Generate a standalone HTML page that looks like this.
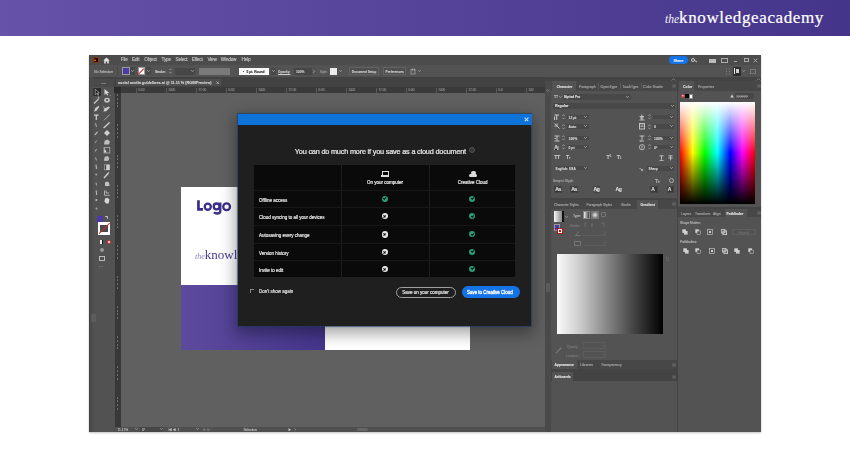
<!DOCTYPE html>
<html><head><meta charset="utf-8">
<style>
*{margin:0;padding:0;box-sizing:border-box}
html,body{width:850px;height:450px;overflow:hidden;background:#fff;font-family:"Liberation Sans",sans-serif}
.a{position:absolute}
.t{position:absolute;white-space:nowrap;line-height:1;color:#d8d8d8}
#hdr{position:absolute;left:0;top:0;width:850px;height:36px;background:linear-gradient(90deg,#6652a8 0%,#44358b 100%)}
#logo{position:absolute;left:665px;top:8.9px;color:#fff;font-family:"Liberation Serif",serif;font-size:17px;line-height:1;white-space:nowrap;letter-spacing:0.62px;-webkit-text-stroke:0.2px #fff}
#logo i{font-size:11.5px;letter-spacing:0;-webkit-text-stroke:0;color:#f4f2fa}
#shot{position:absolute;left:89px;top:55px;width:672px;height:377px;background:#535353;overflow:hidden;box-shadow:0 1px 2px rgba(0,0,0,.25)}
#w{position:absolute;left:-89px;top:-55px;width:850px;height:450px;will-change:transform}

.f{position:absolute;background:#474747}
.x{position:absolute;white-space:nowrap;line-height:1;color:#cfcfcf;font-size:4.6px;-webkit-text-stroke-width:0.12px}
.xb{position:absolute;white-space:nowrap;line-height:1;color:#e6e6e6;font-size:4.6px;font-weight:bold;-webkit-text-stroke-width:0.08px}
.ch{position:absolute;width:3px;height:3px;border-right:0.8px solid #ccc;border-bottom:0.8px solid #ccc;transform:rotate(45deg)}
.ic{position:absolute;background:#bdbdbd}
.sp{position:absolute;width:3px;height:5px}
.sp:before{content:"";position:absolute;left:0;top:0;border-left:1.5px solid transparent;border-right:1.5px solid transparent;border-bottom:1.8px solid #bbb}
.sp:after{content:"";position:absolute;left:0;bottom:0;border-left:1.5px solid transparent;border-right:1.5px solid transparent;border-top:1.8px solid #bbb}
</style></head><body>
<div id="hdr"><div id="logo"><i>the</i>knowledgeacademy</div></div>
<div id="shot"><div id="w">
<!-- MENU BAR -->
<div class="a" style="left:89px;top:55px;width:672px;height:10px;background:#4c4c4c"></div>
<!-- CONTROL BAR -->
<div class="a" style="left:89px;top:65px;width:672px;height:12px;background:#535353"></div>
<!-- TAB BAR -->
<div class="a" style="left:89px;top:77px;width:456px;height:10px;background:#424242"></div>
<div class="a" style="left:115.5px;top:79px;width:105.5px;height:7px;background:#4e4e4e"></div>
<!-- TOOLBAR -->
<div class="a" style="left:89px;top:77px;width:4px;height:355px;background:#4c4c4c"></div><div class="a" style="left:89px;top:77px;width:0.6px;height:355px;background:#404040"></div>
<div class="a" style="left:93px;top:79px;width:21px;height:353px;background:#525252"></div>
<!-- V RULER -->
<div class="a" style="left:114.7px;top:87px;width:6px;height:340px;background:#383838"></div>
<!-- H RULER -->
<div class="a" style="left:114px;top:87px;width:431px;height:5.5px;background:#3a3a3a"></div>
<!-- CANVAS -->
<div class="a" style="left:121px;top:92.5px;width:424px;height:334px;background:#606060"></div>
<!-- STATUS BAR -->
<div class="a" style="left:114px;top:426.5px;width:431px;height:6px;background:#4f4f4f"></div><div class="a" style="left:357px;top:428px;width:11px;height:3px;background:#666;border-radius:1.5px"></div>

<div class="a" style="left:136.4px;top:87.5px;width:0.5px;height:5px;background:#5a5a5a"></div>
<div class="x" style="left:138.4px;top:88.6px;font-size:3.1px;color:#8c8c8c">0:00</div>
<div class="a" style="left:166.4px;top:87.5px;width:0.5px;height:5px;background:#5a5a5a"></div>
<div class="x" style="left:168.4px;top:88.6px;font-size:3.1px;color:#8c8c8c">2400</div>
<div class="a" style="left:196.4px;top:87.5px;width:0.5px;height:5px;background:#5a5a5a"></div>
<div class="x" style="left:198.4px;top:88.6px;font-size:3.1px;color:#8c8c8c">12:00</div>
<div class="a" style="left:226.4px;top:87.5px;width:0.5px;height:5px;background:#5a5a5a"></div>
<div class="x" style="left:228.4px;top:88.6px;font-size:3.1px;color:#8c8c8c">0:00</div>
<div class="a" style="left:256.4px;top:87.5px;width:0.5px;height:5px;background:#5a5a5a"></div>
<div class="x" style="left:258.4px;top:88.6px;font-size:3.1px;color:#8c8c8c">2400</div>
<div class="a" style="left:286.4px;top:87.5px;width:0.5px;height:5px;background:#5a5a5a"></div>
<div class="x" style="left:288.4px;top:88.6px;font-size:3.1px;color:#8c8c8c">12:00</div>
<div class="a" style="left:316.4px;top:87.5px;width:0.5px;height:5px;background:#5a5a5a"></div>
<div class="x" style="left:318.4px;top:88.6px;font-size:3.1px;color:#8c8c8c">0:00</div>
<div class="a" style="left:346.4px;top:87.5px;width:0.5px;height:5px;background:#5a5a5a"></div>
<div class="x" style="left:348.4px;top:88.6px;font-size:3.1px;color:#8c8c8c">2400</div>
<div class="a" style="left:376.4px;top:87.5px;width:0.5px;height:5px;background:#5a5a5a"></div>
<div class="x" style="left:378.4px;top:88.6px;font-size:3.1px;color:#8c8c8c">12:00</div>
<div class="a" style="left:406.4px;top:87.5px;width:0.5px;height:5px;background:#5a5a5a"></div>
<div class="x" style="left:408.4px;top:88.6px;font-size:3.1px;color:#8c8c8c">0:00</div>
<div class="a" style="left:436.4px;top:87.5px;width:0.5px;height:5px;background:#5a5a5a"></div>
<div class="x" style="left:438.4px;top:88.6px;font-size:3.1px;color:#8c8c8c">2400</div>
<div class="a" style="left:466.4px;top:87.5px;width:0.5px;height:5px;background:#5a5a5a"></div>
<div class="x" style="left:468.4px;top:88.6px;font-size:3.1px;color:#8c8c8c">12:00</div>
<div class="a" style="left:496.4px;top:87.5px;width:0.5px;height:5px;background:#5a5a5a"></div>
<div class="x" style="left:498.4px;top:88.6px;font-size:3.1px;color:#8c8c8c">0:0</div>
<div class="a" style="left:526.4px;top:87.5px;width:0.5px;height:5px;background:#5a5a5a"></div>
<div class="x" style="left:528.4px;top:88.6px;font-size:3.1px;color:#8c8c8c">240</div>
<div class="a" style="left:116.6px;top:94.0px;width:1.6px;height:2px;background:#8a8a8a;border-radius:0.5px;opacity:.8"></div>
<div class="a" style="left:116.6px;top:97.8px;width:1.6px;height:2px;background:#8a8a8a;border-radius:0.5px;opacity:.8"></div>
<div class="a" style="left:116.6px;top:101.6px;width:1.6px;height:2px;background:#8a8a8a;border-radius:0.5px;opacity:.8"></div>
<div class="a" style="left:116.6px;top:105.4px;width:1.6px;height:2px;background:#8a8a8a;border-radius:0.5px;opacity:.8"></div>
<div class="a" style="left:116.6px;top:124.2px;width:1.6px;height:2px;background:#8a8a8a;border-radius:0.5px;opacity:.8"></div>
<div class="a" style="left:116.6px;top:128.1px;width:1.6px;height:2px;background:#8a8a8a;border-radius:0.5px;opacity:.8"></div>
<div class="a" style="left:116.6px;top:131.8px;width:1.6px;height:2px;background:#8a8a8a;border-radius:0.5px;opacity:.8"></div>
<div class="a" style="left:116.6px;top:135.7px;width:1.6px;height:2px;background:#8a8a8a;border-radius:0.5px;opacity:.8"></div>
<div class="a" style="left:116.6px;top:154.5px;width:1.6px;height:2px;background:#8a8a8a;border-radius:0.5px;opacity:.8"></div>
<div class="a" style="left:116.6px;top:158.3px;width:1.6px;height:2px;background:#8a8a8a;border-radius:0.5px;opacity:.8"></div>
<div class="a" style="left:116.6px;top:162.1px;width:1.6px;height:2px;background:#8a8a8a;border-radius:0.5px;opacity:.8"></div>
<div class="a" style="left:116.6px;top:165.9px;width:1.6px;height:2px;background:#8a8a8a;border-radius:0.5px;opacity:.8"></div>
<div class="a" style="left:116.6px;top:184.8px;width:1.6px;height:2px;background:#8a8a8a;border-radius:0.5px;opacity:.8"></div>
<div class="a" style="left:116.6px;top:188.6px;width:1.6px;height:2px;background:#8a8a8a;border-radius:0.5px;opacity:.8"></div>
<div class="a" style="left:116.6px;top:192.3px;width:1.6px;height:2px;background:#8a8a8a;border-radius:0.5px;opacity:.8"></div>
<div class="a" style="left:116.6px;top:196.2px;width:1.6px;height:2px;background:#8a8a8a;border-radius:0.5px;opacity:.8"></div>
<div class="a" style="left:116.6px;top:215.0px;width:1.6px;height:2px;background:#8a8a8a;border-radius:0.5px;opacity:.8"></div>
<div class="a" style="left:116.6px;top:218.8px;width:1.6px;height:2px;background:#8a8a8a;border-radius:0.5px;opacity:.8"></div>
<div class="a" style="left:116.6px;top:222.6px;width:1.6px;height:2px;background:#8a8a8a;border-radius:0.5px;opacity:.8"></div>
<div class="a" style="left:116.6px;top:226.4px;width:1.6px;height:2px;background:#8a8a8a;border-radius:0.5px;opacity:.8"></div>
<div class="a" style="left:116.6px;top:245.2px;width:1.6px;height:2px;background:#8a8a8a;border-radius:0.5px;opacity:.8"></div>
<div class="a" style="left:116.6px;top:249.1px;width:1.6px;height:2px;background:#8a8a8a;border-radius:0.5px;opacity:.8"></div>
<div class="a" style="left:116.6px;top:252.8px;width:1.6px;height:2px;background:#8a8a8a;border-radius:0.5px;opacity:.8"></div>
<div class="a" style="left:116.6px;top:256.6px;width:1.6px;height:2px;background:#8a8a8a;border-radius:0.5px;opacity:.8"></div>
<div class="a" style="left:116.6px;top:275.5px;width:1.6px;height:2px;background:#8a8a8a;border-radius:0.5px;opacity:.8"></div>
<div class="a" style="left:116.6px;top:279.3px;width:1.6px;height:2px;background:#8a8a8a;border-radius:0.5px;opacity:.8"></div>
<div class="a" style="left:116.6px;top:283.1px;width:1.6px;height:2px;background:#8a8a8a;border-radius:0.5px;opacity:.8"></div>
<div class="a" style="left:116.6px;top:286.9px;width:1.6px;height:2px;background:#8a8a8a;border-radius:0.5px;opacity:.8"></div>
<div class="a" style="left:116.6px;top:305.8px;width:1.6px;height:2px;background:#8a8a8a;border-radius:0.5px;opacity:.8"></div>
<div class="a" style="left:116.6px;top:309.6px;width:1.6px;height:2px;background:#8a8a8a;border-radius:0.5px;opacity:.8"></div>
<div class="a" style="left:116.6px;top:313.4px;width:1.6px;height:2px;background:#8a8a8a;border-radius:0.5px;opacity:.8"></div>
<div class="a" style="left:116.6px;top:317.1px;width:1.6px;height:2px;background:#8a8a8a;border-radius:0.5px;opacity:.8"></div>
<div class="a" style="left:116.6px;top:336.0px;width:1.6px;height:2px;background:#8a8a8a;border-radius:0.5px;opacity:.8"></div>
<div class="a" style="left:116.6px;top:339.8px;width:1.6px;height:2px;background:#8a8a8a;border-radius:0.5px;opacity:.8"></div>
<div class="a" style="left:116.6px;top:343.6px;width:1.6px;height:2px;background:#8a8a8a;border-radius:0.5px;opacity:.8"></div>
<div class="a" style="left:116.6px;top:347.4px;width:1.6px;height:2px;background:#8a8a8a;border-radius:0.5px;opacity:.8"></div>
<div class="a" style="left:116.6px;top:366.2px;width:1.6px;height:2px;background:#8a8a8a;border-radius:0.5px;opacity:.8"></div>
<div class="a" style="left:116.6px;top:370.1px;width:1.6px;height:2px;background:#8a8a8a;border-radius:0.5px;opacity:.8"></div>
<div class="a" style="left:116.6px;top:373.9px;width:1.6px;height:2px;background:#8a8a8a;border-radius:0.5px;opacity:.8"></div>
<div class="a" style="left:116.6px;top:377.6px;width:1.6px;height:2px;background:#8a8a8a;border-radius:0.5px;opacity:.8"></div>
<div class="a" style="left:116.6px;top:396.5px;width:1.6px;height:2px;background:#8a8a8a;border-radius:0.5px;opacity:.8"></div>
<div class="a" style="left:116.6px;top:400.3px;width:1.6px;height:2px;background:#8a8a8a;border-radius:0.5px;opacity:.8"></div>
<div class="a" style="left:116.6px;top:404.1px;width:1.6px;height:2px;background:#8a8a8a;border-radius:0.5px;opacity:.8"></div>
<div class="a" style="left:116.6px;top:407.9px;width:1.6px;height:2px;background:#8a8a8a;border-radius:0.5px;opacity:.8"></div>
<!-- MENU CONTENT -->
<div class="a" style="left:92.8px;top:57px;width:6px;height:6px;background:#330000;border:0.6px solid #8a3a10;border-radius:1px"></div>
<div class="a" style="left:94.3px;top:58.6px;width:0;height:0;border-left:1.5px solid transparent;border-right:1.5px solid transparent;border-bottom:2.6px solid #ff9a00"></div>
<svg class="a" style="left:103px;top:56.8px" width="7" height="7" viewBox="0 0 7 7"><path d="M0.3 3.4 L3.5 0.4 L6.7 3.4 L5.8 3.4 L5.8 6.6 L4.2 6.6 L4.2 4.6 L2.8 4.6 L2.8 6.6 L1.2 6.6 L1.2 3.4 Z" fill="#e2e2e2"/></svg>

<div class="x" style="left:120.8px;top:58px;font-size:4.7px;letter-spacing:-0.2px;color:#c8c8c8">File</div>
<div class="x" style="left:132px;top:58px;font-size:4.7px;letter-spacing:-0.2px;color:#c8c8c8">Edit</div>
<div class="x" style="left:144.3px;top:58px;font-size:4.7px;letter-spacing:-0.2px;color:#c8c8c8">Object</div>
<div class="x" style="left:161.5px;top:58px;font-size:4.7px;letter-spacing:-0.2px;color:#c8c8c8">Type</div>
<div class="x" style="left:175.6px;top:58px;font-size:4.7px;letter-spacing:-0.2px;color:#c8c8c8">Select</div>
<div class="x" style="left:191.8px;top:58px;font-size:4.7px;letter-spacing:-0.2px;color:#c8c8c8">Effect</div>
<div class="x" style="left:207.4px;top:58px;font-size:4.7px;letter-spacing:-0.2px;color:#c8c8c8">View</div>
<div class="x" style="left:220.8px;top:58px;font-size:4.7px;letter-spacing:-0.2px;color:#c8c8c8">Window</div>
<div class="x" style="left:241.5px;top:58px;font-size:4.7px;letter-spacing:-0.2px;color:#c8c8c8">Help</div>

<div class="a" style="left:669.3px;top:56.4px;width:18.5px;height:7.8px;border-radius:3.9px;background:#1473e6"></div>
<div class="xb" style="left:673.4px;top:59.6px;font-size:3.7px;color:#e8f0ff">Share</div>
<div class="a" style="left:691px;top:57.5px;width:4.2px;height:4.2px;border:1px solid #ccc;border-radius:50%"></div>
<div class="a" style="left:695px;top:61.3px;width:2.2px;height:1px;background:#ccc;transform:rotate(45deg)"></div>
<div class="a" style="left:709px;top:58.5px;width:6.5px;height:4.5px;background:#bbb"></div>
<div class="a" style="left:721px;top:58px;width:6.5px;height:5px;border:0.8px solid #aaa"></div>
<div class="a" style="left:733.5px;top:60.5px;width:3.5px;height:0.8px;background:#aaa"></div>
<div class="a" style="left:744px;top:57.5px;width:4.5px;height:4px;border:0.8px solid #aaa"></div>
<svg class="a" style="left:753px;top:57.5px" width="5" height="5" viewBox="0 0 5 5"><path d="M0.6 0.6 L4.4 4.4 M4.4 0.6 L0.6 4.4" stroke="#c4c4c4" stroke-width="0.7"/></svg>

<!-- CONTROL BAR CONTENT -->
<div class="x" style="left:94.3px;top:70.85px;font-size:3.3px;color:#bdbdbd;">No Selection</div>
<div class="a" style="left:116.5px;top:66.5px;width:0.6px;height:9px;background:#474747;"></div>
<div class="a" style="left:122.3px;top:67.3px;width:7.3px;height:7.7px;background:#4a3ca6;border:0.8px solid #9a9a9a"></div>
<div class="a" style="left:130px;top:67.3px;width:5px;height:7.7px;background:#474747;"></div>
<svg class="a" style="left:131.0px;top:70.2px" width="3" height="2" viewBox="0 0 3 2"><path d="M0.2 0.2 L1.5 1.6 L2.8 0.2" fill="none" stroke="#bbb" stroke-width="0.7"/></svg>
<div class="a" style="left:137.8px;top:67.3px;width:7.1px;height:7.7px;background:#fff;border:0.8px solid #9a9a9a"></div>
<div class="a" style="left:137.3px;top:70.7px;width:8.2px;height:0.9px;background:#d22;transform:rotate(-45deg)"></div>
<div class="a" style="left:145.5px;top:67.3px;width:5px;height:7.7px;background:#474747;"></div>
<svg class="a" style="left:146.5px;top:70.2px" width="3" height="2" viewBox="0 0 3 2"><path d="M0.2 0.2 L1.5 1.6 L2.8 0.2" fill="none" stroke="#bbb" stroke-width="0.7"/></svg>
<div class="xb" style="left:154.9px;top:70.85px;font-size:3.2px;color:#cfcfcf;">Stroke:</div>
<svg class="a" style="left:168.5px;top:68px" width="3" height="6" viewBox="0 0 3 6"><path d="M0.3 2.2 L1.5 0.8 L2.7 2.2 M0.3 3.8 L1.5 5.2 L2.7 3.8" fill="none" stroke="#bbb" stroke-width="0.6"/></svg>
<div class="a" style="left:175px;top:67.5px;width:20px;height:7.2px;background:#474747;"></div>
<svg class="a" style="left:190.5px;top:70.2px" width="3" height="2" viewBox="0 0 3 2"><path d="M0.2 0.2 L1.5 1.6 L2.8 0.2" fill="none" stroke="#bbb" stroke-width="0.7"/></svg>
<div class="a" style="left:199px;top:67.6px;width:31.1px;height:7.1px;background:#7a7a7a;"></div>
<div class="a" style="left:239.2px;top:68px;width:29.8px;height:6.5px;background:#f7f7f7;"></div>
<div class="a" style="left:242.5px;top:70.6px;width:1.2px;height:1.2px;background:#222;border-radius:50%"></div>
<div class="xb" style="left:246.5px;top:70.85px;font-size:3.3px;color:#1a1a1a;">5 pt. Round</div>
<div class="a" style="left:270.5px;top:68px;width:5px;height:6.5px;background:#474747;"></div>
<svg class="a" style="left:271.5px;top:70.2px" width="3" height="2" viewBox="0 0 3 2"><path d="M0.2 0.2 L1.5 1.6 L2.8 0.2" fill="none" stroke="#bbb" stroke-width="0.7"/></svg>
<div class="xb" style="left:278px;top:70.85px;font-size:3.1px;color:#cfcfcf;text-decoration:underline">Opacity:</div>
<div class="a" style="left:294px;top:67.6px;width:17.8px;height:7px;background:#474747;"></div>
<div class="xb" style="left:296px;top:70.85px;font-size:3.3px;color:#cfcfcf;">100%</div>
<svg class="a" style="left:312.8px;top:69.5px" width="2" height="3" viewBox="0 0 2 3"><path d="M0.2 0.2 L1.6 1.5 L0.2 2.8" fill="none" stroke="#bbb" stroke-width="0.6"/></svg>
<div class="x" style="left:319.7px;top:70.85px;font-size:3.1px;color:#9a9a9a;">Style:</div>
<div class="a" style="left:330px;top:67.5px;width:7px;height:7px;background:#ececec;"></div>
<svg class="a" style="left:338.5px;top:70.2px" width="3" height="2" viewBox="0 0 3 2"><path d="M0.2 0.2 L1.5 1.6 L2.8 0.2" fill="none" stroke="#bbb" stroke-width="0.7"/></svg>
<div class="a" style="left:348.5px;top:67.3px;width:30.5px;height:7.5px;background:#4e4e4e;border:0.6px solid #626262"></div>
<div class="xb" style="left:351.8px;top:70.85px;font-size:3.1px;color:#d4d4d4;">Document Setup</div>
<div class="a" style="left:383px;top:67.3px;width:23px;height:7.5px;background:#4e4e4e;border:0.6px solid #626262"></div>
<div class="xb" style="left:385.5px;top:70.85px;font-size:3.2px;color:#d4d4d4;">Preferences</div>
<svg class="a" style="left:410px;top:67.5px" width="7" height="7" viewBox="0 0 7 7"><rect x="1" y="1.5" width="4" height="4.5" fill="none" stroke="#aaa" stroke-width="0.7"/><path d="M2.5 0.5 V3 M4.5 0.5 V3" stroke="#aaa" stroke-width="0.6"/></svg>
<svg class="a" style="left:417.5px;top:70.2px" width="3" height="2" viewBox="0 0 3 2"><path d="M0.2 0.2 L1.5 1.6 L2.8 0.2" fill="none" stroke="#aaa" stroke-width="0.7"/></svg>
<svg class="a" style="left:724.5px;top:67.5px" width="6" height="7" viewBox="0 0 6 7"><path d="M1 1 H2 M4 1 H5 M1 3.5 H2 M4 3.5 H5 M1 6 H2 M4 6 H5" stroke="#8a8a8a" stroke-width="0.8"/></svg>
<div class="a" style="left:732.5px;top:66.5px;width:8px;height:9px;background:#2e2e2e;"></div>
<div class="a" style="left:733.6px;top:67.8px;width:1.6px;height:6.6px;background:#e8e8e8;"></div>
<div class="a" style="left:735.8px;top:69.3px;width:3.2px;height:3.6px;background:#d0d0d0;"></div>
<svg class="a" style="left:742.0px;top:70.2px" width="3" height="2" viewBox="0 0 3 2"><path d="M0.2 0.2 L1.5 1.6 L2.8 0.2" fill="none" stroke="#aaa" stroke-width="0.7"/></svg>
<div class="a" style="left:750px;top:68.5px;width:5.5px;height:5px;background:transparent;border:0.6px solid #777"></div>
<!-- DOC TAB -->
<div class="xb" style="left:118px;top:82.1px;font-size:3.8px;color:#dcdcdc">social media guidelines.ai @ 11.11 % (RGB/Preview)</div>
<svg class="a" style="left:215.8px;top:80.8px" width="3.5" height="3.5" viewBox="0 0 3.5 3.5"><path d="M0.4 0.4 L3.1 3.1 M3.1 0.4 L0.4 3.1" stroke="#d0d0d0" stroke-width="0.6"/></svg>

<!-- H RULER LABELS -->
<div class="a" style="left:114px;top:87px;width:7px;height:5.5px;background:#2c2c2c"></div>

<div class="a" style="left:93px;top:79px;width:21px;height:8px;background:#4a4a4a"></div>
<div class="a" style="left:101px;top:82.5px;width:5px;height:0.7px;background:#777"></div>
<svg class="a" style="left:89px;top:85px" width="32" height="130" viewBox="89 85 32 130">
<g fill="#c8c8c8" stroke="none">
<rect x="93.3" y="88.2" width="7.6" height="7.6" fill="#262626"/>
<path d="M95.2 89.3 L95.2 94.6 L96.6 93.3 L97.8 95.2 L98.6 94.8 L97.5 92.9 L99.3 92.7 Z" fill="#1a1a1a" stroke="#d0d0d0" stroke-width="0.6"/>
<path d="M104.5 89 L104.5 95 L106 93.6 L107.2 95.6 L108.2 95.1 L107.1 93.2 L109.3 93 Z" fill="#d8d8d8"/>
<rect x="109.8" y="95.2" width="1" height="1" fill="#999"/>
<!-- wand / lasso -->
<path d="M94 103.5 L98.5 99" stroke="#c8c8c8" stroke-width="1.2"/>
<path d="M97.3 97.8 L99.8 97.8 M98.5 96.6 L98.5 99" stroke="#bbb" stroke-width="0.6"/>
<ellipse cx="107" cy="100.2" rx="2.8" ry="2.4" fill="#c4c4c4"/>
<ellipse cx="107" cy="100" rx="1.2" ry="0.9" fill="#555"/>
<!-- pen / curvature -->
<path d="M94 111.8 L95.2 108.2 L98.6 105.8 L99.2 107 L96.8 110.6 Z" fill="#cdcdcd"/>
<path d="M103.4 111.5 L104.4 108.6 L108.8 106.4 L109.8 107.6 L106.2 111.2 Z" fill="#cdcdcd"/>
<path d="M103.6 106 L104.4 109" stroke="#bbb" stroke-width="0.6"/>
<!-- Type / line -->
<path d="M94 115.2 L98.6 115.2 M96.3 115.2 L96.3 120" stroke="#d0d0d0" stroke-width="1.2"/>
<path d="M104 120.3 L109.8 114.5" stroke="#c8c8c8" stroke-width="0.7"/>
<!-- row 125 -->
<path d="M95.5 123 L96.5 127" stroke="#aaa" stroke-width="1"/>
<path d="M103.6 128 L109.6 122.4" stroke="#d0d0d0" stroke-width="1.3"/>
<!-- row 133 -->
<path d="M94.8 134.8 L97.6 131.8" stroke="#c8c8c8" stroke-width="1.1"/>
<path d="M104 133 L107 130 L110 133 L107 136 Z" fill="#d0d0d0"/>
<!-- row 142 -->
<path d="M95 143 L96.8 140.5" stroke="#aaa" stroke-width="0.9"/>
<path d="M104 144.5 L104.6 140.8 L107.5 139.6 L110 141.5 L109 144.5 Z" fill="#bdbdbd"/>
<!-- row 150 -->
<path d="M95.2 151.5 L96.5 149" stroke="#bbb" stroke-width="1"/>
<rect x="104" y="147.5" width="5.8" height="5.5" fill="none" stroke="#b8b8b8" stroke-width="0.7"/>
<path d="M104.2 148 L106.8 152.6 L104.2 152.6Z" fill="#d8d8d8"/>
<!-- row 159 -->
<path d="M95.5 157.5 L96.5 160.5" stroke="#aaa" stroke-width="1"/>
<path d="M103.8 160.8 L104.8 156.8 L107.8 156 L109.4 158.5 L108 161 Z" fill="#bbb"/>
<!-- row 167 -->
<path d="M96 164.5 L96.5 169" stroke="#bbb" stroke-width="1.1"/>
<rect x="104.2" y="164.5" width="5.6" height="5.6" fill="#cfcfcf"/>
<rect x="104.6" y="165" width="1.6" height="4.6" fill="#444"/>
<!-- row 175 -->
<circle cx="96.2" cy="174.5" r="0.9" fill="#aaa"/>
<path d="M104 178 L108.8 172.6" stroke="#cdcdcd" stroke-width="1.5"/>
<!-- row 184 -->
<path d="M96 182.5 L96.5 185.5" stroke="#aaa" stroke-width="1"/>
<path d="M105 186 L105 182.5 L107 181.5 L109 182.5 L109.5 186 Z" fill="#c4c4c4"/>
<!-- row 193 -->
<path d="M96.2 190.5 L96.6 195" stroke="#bbb" stroke-width="1.1"/>
<path d="M104.5 190.5 L104.5 195.3 L109.8 195.3 M106 190.5 L106 193 L109 193" fill="none" stroke="#c4c4c4" stroke-width="0.8"/>
<!-- row 201 -->
<circle cx="96.3" cy="200" r="1" fill="#bbb"/>
<path d="M104.5 201.5 L105 198.5 L107.5 197.8 L109.5 199.5 L108.6 203.4 L106 203.5 Z" fill="#d4d4d4"/>
<!-- row 209 -->
<circle cx="96.5" cy="208.5" r="0.9" fill="#aaa"/>
</g></svg>
<div class="a" style="left:96.8px;top:215.9px;width:6.2px;height:6.1px;background:#4b3aa8"></div>
<div class="a" style="left:105px;top:216px;width:3px;height:3px;border-top:0.8px solid #bbb;border-right:0.8px solid #bbb"></div>
<div class="a" style="left:97.5px;top:222px;width:12.5px;height:12.5px;background:#fff"></div>
<div class="a" style="left:100px;top:224.5px;width:7.5px;height:7.5px;background:#4a4a4a"></div>
<div class="a" style="left:96.5px;top:227.8px;width:14.5px;height:1px;background:#d22;transform:rotate(-45deg)"></div>
<div class="a" style="left:100px;top:239.5px;width:1.5px;height:4px;background:#eee"></div>
<div class="a" style="left:101.5px;top:239.5px;width:1.5px;height:4px;background:#111"></div>
<div class="a" style="left:106.5px;top:239.5px;width:4px;height:4px;border-radius:50%;background:#fff;border:1px solid #d22"></div>
<div class="a" style="left:99.5px;top:248px;width:4px;height:4px;background:#aaa;border-radius:50%;opacity:.8"></div>
<div class="a" style="left:98.5px;top:256px;width:6px;height:5px;border:0.8px solid #bbb"></div>
<div class="x" style="left:98.5px;top:263.5px;font-size:5px;color:#aaa">&middot;&middot;&middot;</div>
<div class="a" style="left:91px;top:314px;width:4.8px;height:8.4px;background:#5c5c5c;border-radius:1px"></div>

<!-- STATUS BAR -->
<div class="x" style="left:117.5px;top:428.95px;font-size:3.3px;color:#bdbdbd">11.11%</div>
<svg class="a" style="left:134.5px;top:428.3px" width="3" height="2" viewBox="0 0 3 2"><path d="M0.2 0.2 L1.5 1.6 L2.8 0.2" fill="none" stroke="#bbb" stroke-width="0.6"/></svg>
<div class="a" style="left:140px;top:427px;width:23px;height:5px;background:#474747"></div>
<div class="x" style="left:142px;top:428.95px;font-size:3.3px;color:#bdbdbd">0&deg;</div>
<svg class="a" style="left:159.5px;top:428.3px" width="3" height="2" viewBox="0 0 3 2"><path d="M0.2 0.2 L1.5 1.6 L2.8 0.2" fill="none" stroke="#bbb" stroke-width="0.6"/></svg>
<svg class="a" style="left:168px;top:427.6px" width="16" height="3.5" viewBox="0 0 16 3.5"><path d="M0.5 0.3 V3.2 M3.5 0.3 L1 1.75 L3.5 3.2Z M7.5 0.3 L5 1.75 L7.5 3.2Z" fill="#bbb" stroke="#bbb" stroke-width="0.4"/></svg>
<div class="x" style="left:177.5px;top:428.95px;font-size:3.3px;color:#bdbdbd">1</div>
<svg class="a" style="left:196.3px;top:428.3px" width="3" height="2" viewBox="0 0 3 2"><path d="M0.2 0.2 L1.5 1.6 L2.8 0.2" fill="none" stroke="#bbb" stroke-width="0.6"/></svg>
<svg class="a" style="left:203px;top:427.6px" width="12" height="3.5" viewBox="0 0 12 3.5"><path d="M0.5 0.3 L3 1.75 L0.5 3.2Z M4.5 0.3 L7 1.75 L4.5 3.2Z M8 0.3 V3.2" fill="#777" stroke="#777" stroke-width="0.4"/></svg>
<div class="x" style="left:243.4px;top:428.95px;font-size:3.3px;color:#bdbdbd">Selection</div>
<svg class="a" style="left:288px;top:427.6px" width="10" height="3.5" viewBox="0 0 10 3.5"><path d="M0.5 0.3 L3 1.75 L0.5 3.2Z" fill="#ccc"/><path d="M6.5 0.5 L7.8 1.75 L6.5 3" fill="none" stroke="#bbb" stroke-width="0.5"/></svg>
<!-- scroll thumb right -->




<!-- RIGHT DOCK -->
<div class="a" style="left:545px;top:77px;width:216px;height:355px;background:#444"></div>
<div class="a" style="left:545px;top:81px;width:6px;height:351px;background:#4a4a4a"></div>
<!-- character panel -->
<div class="a" style="left:551px;top:81px;width:126px;height:10px;background:#474747"></div>
<div class="a" style="left:552px;top:81px;width:23.5px;height:10px;background:#535353"></div>
<div class="a" style="left:551px;top:91px;width:126px;height:107px;background:#535353"></div>
<!-- gradient panel -->
<div class="a" style="left:551px;top:199.5px;width:126px;height:9px;background:#474747"></div>
<div class="a" style="left:551px;top:208.5px;width:126px;height:151.5px;background:#535353"></div>
<!-- appearance -->
<div class="a" style="left:551px;top:360px;width:126px;height:9.3px;background:#474747"></div>
<div class="a" style="left:552px;top:360px;width:25px;height:9.3px;background:#535353"></div>
<div class="a" style="left:551px;top:372px;width:126px;height:9.3px;background:#434343"></div>
<div class="a" style="left:552px;top:372px;width:21px;height:9.3px;background:#535353"></div>
<div class="a" style="left:551px;top:381.3px;width:126px;height:51px;background:#535353"></div>
<!-- color panel -->
<div class="a" style="left:678px;top:81px;width:83px;height:10px;background:#474747"></div>
<div class="a" style="left:679px;top:81px;width:15px;height:10px;background:#535353"></div>
<div class="a" style="left:678px;top:91px;width:83px;height:116px;background:#535353"></div>
<div class="a" style="left:680.3px;top:102.4px;width:74.6px;height:102.1px;background:linear-gradient(to bottom,rgba(0,0,0,0) 50%,#000 100%),linear-gradient(to bottom,#fff 0%,rgba(255,255,255,0) 50%),linear-gradient(90deg,#f00 0%,#ff0 17%,#0f0 33%,#0ff 50%,#00f 67%,#f0f 83%,#f00 100%)"></div>
<div class="a" style="left:678px;top:209px;width:83px;height:8.4px;background:#474747"></div>
<div class="a" style="left:724.7px;top:209px;width:22.3px;height:8.4px;background:#535353"></div>
<div class="a" style="left:678px;top:217.4px;width:83px;height:215px;background:#535353"></div>


<svg class="a" style="left:670.5px;top:78px" width="5" height="3" viewBox="0 0 5 3"><path d="M0.5 2.5 L2.5 0.5 L4.5 2.5" fill="none" stroke="#999" stroke-width="0.6"/></svg><svg class="a" style="left:756px;top:78px" width="5" height="3" viewBox="0 0 5 3"><path d="M0.5 2.5 L2.5 0.5 L4.5 2.5" fill="none" stroke="#999" stroke-width="0.6"/></svg>
<div class="a" style="left:546px;top:283px;width:4px;height:8.5px;background:#5c5c5c;border-radius:1px"></div>
<svg class="a" style="left:546px;top:88.5px" width="4" height="3" viewBox="0 0 4 3"><path d="M2 0.3 L0.6 1.5 L2 2.7 M3.6 0.3 L2.2 1.5 L3.6 2.7" fill="none" stroke="#9a9a9a" stroke-width="0.5"/></svg>
<!-- CHARACTER PANEL CONTENT -->
<div class="xb" style="left:556.7px;top:85.65px;font-size:3.35px;color:#e0e0e0;">Character</div>
<div class="x" style="left:579px;top:85.65px;font-size:3.6px;color:#a8a8a8;">Paragraph</div>
<div class="a" style="left:598px;top:83px;width:0.5px;height:6px;background:#5a5a5a;"></div>
<div class="x" style="left:600.6px;top:85.65px;font-size:3.6px;color:#a8a8a8;">OpenType</div>
<div class="a" style="left:620px;top:83px;width:0.5px;height:6px;background:#5a5a5a;"></div>
<div class="x" style="left:622.3px;top:85.65px;font-size:3.3px;color:#a8a8a8;">TouchType</div>
<div class="a" style="left:640.5px;top:83px;width:0.5px;height:6px;background:#5a5a5a;"></div>
<div class="x" style="left:643px;top:85.65px;font-size:3.7px;color:#a8a8a8;">Color Guide</div>
<svg class="a" style="left:671.5px;top:84px" width="4" height="4" viewBox="0 0 4 4"><path d="M0.3 1 H3.7 M0.3 2 H3.7 M0.3 3 H3.7" stroke="#8a8a8a" stroke-width="0.45"/></svg>
<div class="xb" style="left:554px;top:96.35px;font-size:3.6px;color:#c4c4c4;">T<span style="font-size:2.8px">T</span></div>
<svg class="a" style="left:559.0px;top:95.5px" width="3" height="2" viewBox="0 0 3 2"><path d="M0.2 0.2 L1.5 1.6 L2.8 0.2" fill="none" stroke="#aaa" stroke-width="0.7"/></svg>
<div class="a" style="left:562.5px;top:93.6px;width:68px;height:6.2px;background:#484848;"></div>
<div class="xb" style="left:564px;top:96.35px;font-size:3.15px;color:#e4e4e4;">Myriad Pro</div>
<svg class="a" style="left:625.5px;top:95.5px" width="3" height="2" viewBox="0 0 3 2"><path d="M0.2 0.2 L1.5 1.6 L2.8 0.2" fill="none" stroke="#c8c8c8" stroke-width="0.7"/></svg>
<div class="a" style="left:553px;top:102.9px;width:122px;height:5.8px;background:#484848;"></div>
<div class="xb" style="left:555px;top:105.45px;font-size:3.6px;color:#e4e4e4;">Regular</div>
<svg class="a" style="left:670.5px;top:104.8px" width="3" height="2" viewBox="0 0 3 2"><path d="M0.2 0.2 L1.5 1.6 L2.8 0.2" fill="none" stroke="#c8c8c8" stroke-width="0.7"/></svg>
<svg class="a" style="left:553.6px;top:114px" width="6.5" height="7" viewBox="0 0 6.5 7"><path d="M0.5 1 H5 M2.7 1 V6 M0.6 2.5 V6" stroke="#ccc" stroke-width="1"/></svg>
<svg class="a" style="left:561.8px;top:114.2px" width="3" height="5.6" viewBox="0 0 3 5.6"><path d="M0.3 2 L1.5 0.6 L2.7 2 M0.3 3.6 L1.5 5 L2.7 3.6" fill="none" stroke="#bbb" stroke-width="0.6"/></svg>
<div class="a" style="left:567.3px;top:114.7px;width:21.4px;height:4.8px;background:#484848;"></div>
<div class="xb" style="left:568.5px;top:116.75px;font-size:3.4px;color:#dedede;">12 pt</div>
<svg class="a" style="left:584.0px;top:116px" width="3" height="2" viewBox="0 0 3 2"><path d="M0.2 0.2 L1.5 1.6 L2.8 0.2" fill="none" stroke="#c8c8c8" stroke-width="0.7"/></svg>
<svg class="a" style="left:638.9px;top:114px" width="6.5" height="7" viewBox="0 0 6.5 7"><path d="M2.8 0.5 V6 M0.6 2.5 H5 M0.5 6 H5.5 M1 4 H4.6" stroke="#ccc" stroke-width="0.9"/></svg>
<svg class="a" style="left:648.0px;top:114.2px" width="3" height="5.6" viewBox="0 0 3 5.6"><path d="M0.3 2 L1.5 0.6 L2.7 2 M0.3 3.6 L1.5 5 L2.7 3.6" fill="none" stroke="#bbb" stroke-width="0.6"/></svg>
<div class="a" style="left:653px;top:114.7px;width:20.6px;height:4.8px;background:#484848;"></div>
<div class="xb" style="left:654px;top:116.75px;font-size:3.4px;color:#dedede;"></div>
<svg class="a" style="left:669.5px;top:116px" width="3" height="2" viewBox="0 0 3 2"><path d="M0.2 0.2 L1.5 1.6 L2.8 0.2" fill="none" stroke="#c8c8c8" stroke-width="0.7"/></svg>
<svg class="a" style="left:553.6px;top:123.4px" width="6.5" height="7" viewBox="0 0 6.5 7"><path d="M0.5 0.5 L5.5 5.5 M0.5 3 H3 M3 0.5 V3" stroke="#ccc" stroke-width="0.9"/></svg>
<svg class="a" style="left:561.8px;top:123.60000000000001px" width="3" height="5.6" viewBox="0 0 3 5.6"><path d="M0.3 2 L1.5 0.6 L2.7 2 M0.3 3.6 L1.5 5 L2.7 3.6" fill="none" stroke="#bbb" stroke-width="0.6"/></svg>
<div class="a" style="left:567.3px;top:124.10000000000001px;width:21.4px;height:4.8px;background:#484848;"></div>
<div class="xb" style="left:568.5px;top:126.15px;font-size:3.4px;color:#dedede;">Auto</div>
<svg class="a" style="left:584.0px;top:125.4px" width="3" height="2" viewBox="0 0 3 2"><path d="M0.2 0.2 L1.5 1.6 L2.8 0.2" fill="none" stroke="#c8c8c8" stroke-width="0.7"/></svg>
<svg class="a" style="left:638.9px;top:123.4px" width="6.5" height="7" viewBox="0 0 6.5 7"><rect x="0.5" y="0.5" width="5" height="5.5" fill="none" stroke="#ccc" stroke-width="0.9"/><path d="M1.5 2 H4.5 M1.5 3.5 H4.5" stroke="#ccc" stroke-width="0.7"/></svg>
<svg class="a" style="left:648.0px;top:123.60000000000001px" width="3" height="5.6" viewBox="0 0 3 5.6"><path d="M0.3 2 L1.5 0.6 L2.7 2 M0.3 3.6 L1.5 5 L2.7 3.6" fill="none" stroke="#bbb" stroke-width="0.6"/></svg>
<div class="a" style="left:653px;top:124.10000000000001px;width:20.6px;height:4.8px;background:#484848;"></div>
<div class="xb" style="left:654px;top:126.15px;font-size:3.4px;color:#dedede;">0</div>
<svg class="a" style="left:669.5px;top:125.4px" width="3" height="2" viewBox="0 0 3 2"><path d="M0.2 0.2 L1.5 1.6 L2.8 0.2" fill="none" stroke="#c8c8c8" stroke-width="0.7"/></svg>
<svg class="a" style="left:553.6px;top:135px" width="6.5" height="7" viewBox="0 0 6.5 7"><path d="M0.5 1 H5.5 M3 1 V6 M0.5 3.5 H2 M0.5 6 H5.5" stroke="#ccc" stroke-width="0.9"/></svg>
<svg class="a" style="left:561.8px;top:135.2px" width="3" height="5.6" viewBox="0 0 3 5.6"><path d="M0.3 2 L1.5 0.6 L2.7 2 M0.3 3.6 L1.5 5 L2.7 3.6" fill="none" stroke="#bbb" stroke-width="0.6"/></svg>
<div class="a" style="left:567.3px;top:135.7px;width:21.4px;height:4.8px;background:#484848;"></div>
<div class="xb" style="left:568.5px;top:137.75px;font-size:3.4px;color:#dedede;">100%</div>
<svg class="a" style="left:584.0px;top:137px" width="3" height="2" viewBox="0 0 3 2"><path d="M0.2 0.2 L1.5 1.6 L2.8 0.2" fill="none" stroke="#c8c8c8" stroke-width="0.7"/></svg>
<svg class="a" style="left:638.9px;top:135px" width="6.5" height="7" viewBox="0 0 6.5 7"><path d="M0.5 1 H5.5 M3 1 V5 M1 6 H5 M0.5 5 L1.5 6 L0.5 7" stroke="#ccc" stroke-width="0.9"/></svg>
<svg class="a" style="left:648.0px;top:135.2px" width="3" height="5.6" viewBox="0 0 3 5.6"><path d="M0.3 2 L1.5 0.6 L2.7 2 M0.3 3.6 L1.5 5 L2.7 3.6" fill="none" stroke="#bbb" stroke-width="0.6"/></svg>
<div class="a" style="left:653px;top:135.7px;width:20.6px;height:4.8px;background:#484848;"></div>
<div class="xb" style="left:654px;top:137.75px;font-size:3.4px;color:#dedede;">100%</div>
<svg class="a" style="left:669.5px;top:137px" width="3" height="2" viewBox="0 0 3 2"><path d="M0.2 0.2 L1.5 1.6 L2.8 0.2" fill="none" stroke="#c8c8c8" stroke-width="0.7"/></svg>
<svg class="a" style="left:553.6px;top:143.9px" width="6.5" height="7" viewBox="0 0 6.5 7"><path d="M0.5 6 L2 1 L3.5 6 M1 4 H3 M4 2 V6" stroke="#ccc" stroke-width="0.9"/></svg>
<svg class="a" style="left:561.8px;top:144.1px" width="3" height="5.6" viewBox="0 0 3 5.6"><path d="M0.3 2 L1.5 0.6 L2.7 2 M0.3 3.6 L1.5 5 L2.7 3.6" fill="none" stroke="#bbb" stroke-width="0.6"/></svg>
<div class="a" style="left:567.3px;top:144.6px;width:21.4px;height:4.8px;background:#484848;"></div>
<div class="xb" style="left:568.5px;top:146.65px;font-size:3.4px;color:#dedede;">0 pt</div>
<svg class="a" style="left:584.0px;top:145.9px" width="3" height="2" viewBox="0 0 3 2"><path d="M0.2 0.2 L1.5 1.6 L2.8 0.2" fill="none" stroke="#c8c8c8" stroke-width="0.7"/></svg>
<svg class="a" style="left:638.9px;top:143.9px" width="6.5" height="7" viewBox="0 0 6.5 7"><circle cx="3" cy="3.2" r="2.6" fill="none" stroke="#ccc" stroke-width="0.8"/><path d="M3 1.8 V4.6" stroke="#ccc" stroke-width="0.8"/></svg>
<svg class="a" style="left:648.0px;top:144.1px" width="3" height="5.6" viewBox="0 0 3 5.6"><path d="M0.3 2 L1.5 0.6 L2.7 2 M0.3 3.6 L1.5 5 L2.7 3.6" fill="none" stroke="#bbb" stroke-width="0.6"/></svg>
<div class="a" style="left:653px;top:144.6px;width:20.6px;height:4.8px;background:#484848;"></div>
<div class="xb" style="left:654px;top:146.65px;font-size:3.4px;color:#dedede;">0&deg;</div>
<svg class="a" style="left:669.5px;top:145.9px" width="3" height="2" viewBox="0 0 3 2"><path d="M0.2 0.2 L1.5 1.6 L2.8 0.2" fill="none" stroke="#c8c8c8" stroke-width="0.7"/></svg>
<div class="xb" style="left:554.3px;top:155.42px;font-size:5.2px;color:#c8c8c8;letter-spacing:-0.5px">TT</div>
<div class="xb" style="left:566px;top:155.42px;font-size:5.2px;color:#c8c8c8;">T<span style="font-size:3.2px">r</span></div>
<div class="xb" style="left:606.5px;top:155.42px;font-size:5.2px;color:#c8c8c8;">T<span style='font-size:3px;vertical-align:top'>1</span></div>
<div class="xb" style="left:616.7px;top:155.42px;font-size:5.2px;color:#c8c8c8;">T<span style='font-size:3px'>1</span></div>
<svg class="a" style="left:658.5px;top:154.5px" width="5" height="6" viewBox="0 0 5 6"><path d="M0.5 0.8 H4.5 M2.5 0.8 V4.6 M0.5 5.4 H4.5" stroke="#c8c8c8" stroke-width="0.9"/></svg>
<svg class="a" style="left:668px;top:154.5px" width="5" height="6" viewBox="0 0 5 6"><path d="M0.5 0.8 H4.5 M2.5 0.8 V5.4 M0.3 3 H4.7" stroke="#c8c8c8" stroke-width="0.9"/></svg>
<div class="a" style="left:554.3px;top:166px;width:34.1px;height:4.4px;background:#484848;"></div>
<div class="xb" style="left:555.5px;top:167.85px;font-size:3.2px;color:#dedede;">English: USA</div>
<svg class="a" style="left:583.5px;top:167.2px" width="3" height="2" viewBox="0 0 3 2"><path d="M0.2 0.2 L1.5 1.6 L2.8 0.2" fill="none" stroke="#c8c8c8" stroke-width="0.7"/></svg>
<div class="xb" style="left:639.6px;top:168.05px;font-size:3.8px;color:#c4c4c4;"><sup style="font-size:2.5px">a</sup>a</div>
<div class="a" style="left:647px;top:166px;width:26.7px;height:4.5px;background:#484848;"></div>
<div class="xb" style="left:648.5px;top:167.95px;font-size:3.3px;color:#dedede;">Sharp</div>
<svg class="a" style="left:669.5px;top:167.3px" width="3" height="2" viewBox="0 0 3 2"><path d="M0.2 0.2 L1.5 1.6 L2.8 0.2" fill="none" stroke="#c8c8c8" stroke-width="0.7"/></svg>
<div class="x" style="left:553px;top:180.05px;font-size:3.2px;color:#a8a8a8;">Snap to Glyph</div>
<div class="xb" style="left:655px;top:179.75px;font-size:4.6px;color:#b4b4b4;">T<span style="font-size:3px">h</span></div>
<div class="a" style="left:669px;top:178px;width:5px;height:5px;border:0.7px solid #aaa;border-radius:50%"></div>
<div class="a" style="left:554.3px;top:185.7px;width:7.5px;height:7.5px;background:#363636;border:0.5px solid #444"></div>
<div class="xb" style="left:555.1999999999999px;top:187.40px;font-size:5.0px;color:#e4e4e4;letter-spacing:-0.45px">Aa</div>
<div class="a" style="left:570.3px;top:185.7px;width:7.5px;height:7.5px;background:#363636;border:0.5px solid #444"></div>
<div class="xb" style="left:571.1999999999999px;top:187.40px;font-size:5.0px;color:#e4e4e4;letter-spacing:-0.45px">Aa</div>
<div class="a" style="left:592.7px;top:185.7px;width:7.5px;height:7.5px;background:#5a5a5a;border:0.5px solid #444"></div>
<div class="xb" style="left:593.6px;top:187.40px;font-size:5.0px;color:#e4e4e4;letter-spacing:-0.45px">Ag</div>
<div class="xb" style="left:615.6px;top:187.40px;font-size:5.0px;color:#e4e4e4;letter-spacing:-0.45px">Ag</div>
<div class="a" style="left:650.3px;top:185.7px;width:7.5px;height:7.5px;background:#363636;border:0.5px solid #444"></div>
<div class="xb" style="left:651.1999999999999px;top:187.40px;font-size:5.0px;color:#e4e4e4;letter-spacing:-0.45px">A</div>
<div class="a" style="left:666.8px;top:185.7px;width:7.5px;height:7.5px;background:#363636;border:0.5px solid #444"></div>
<div class="xb" style="left:667.6999999999999px;top:187.40px;font-size:5.0px;color:#e4e4e4;letter-spacing:-0.45px">A</div>
<!-- GRADIENT PANEL -->
<div class="x" style="left:554px;top:203.65px;font-size:3.35px;color:#a8a8a8;">Character Styles</div>
<div class="x" style="left:586.5px;top:203.65px;font-size:3.35px;color:#a8a8a8;">Paragraph Styles</div>
<div class="x" style="left:621px;top:203.65px;font-size:3.35px;color:#a8a8a8;">Stroke</div>
<div class="a" style="left:637px;top:199.5px;width:21px;height:9px;background:#535353;"></div>
<div class="xb" style="left:640.5px;top:203.65px;font-size:3.5px;color:#e0e0e0;">Gradient</div>
<svg class="a" style="left:671.5px;top:202px" width="4" height="4" viewBox="0 0 4 4"><path d="M0.3 1 H3.7 M0.3 2 H3.7 M0.3 3 H3.7" stroke="#8a8a8a" stroke-width="0.45"/></svg>
<div class="a" style="left:553.7px;top:211.4px;width:8.5px;height:10.6px;background:linear-gradient(90deg,#f8f8f8,#8a8a8a);"></div>
<div class="a" style="left:562.2px;top:211.4px;width:1.8px;height:10.6px;background:#111;"></div>
<svg class="a" style="left:565.0px;top:215.5px" width="3" height="2" viewBox="0 0 3 2"><path d="M0.2 0.2 L1.5 1.6 L2.8 0.2" fill="none" stroke="#aaa" stroke-width="0.7"/></svg>
<div class="x" style="left:573px;top:214.65px;font-size:3.3px;color:#bdbdbd;">Type:</div>
<div class="a" style="left:583.5px;top:211.8px;width:5.5px;height:6px;background:linear-gradient(90deg,#eee,#444);outline:0.6px solid #888"></div>
<div class="a" style="left:592px;top:211.8px;width:5.5px;height:6px;background:radial-gradient(#eee,#555);outline:0.6px solid #777"></div>
<div class="a" style="left:601px;top:212px;width:5px;height:5px;border:0.6px solid #777;border-radius:1px"></div>
<div class="a" style="left:553.7px;top:224px;width:6.3px;height:7px;background:#4b3aa8;border:0.6px solid #999"></div>
<div class="a" style="left:557px;top:228px;width:6.2px;height:6.2px;background:#fff;border:1.3px solid #b11"></div>
<div class="a" style="left:559.3px;top:230.3px;width:1.6px;height:1.6px;background:#b11;"></div>
<div class="x" style="left:570px;top:224.65px;font-size:3.1px;color:#7a7a7a;">Stroke:</div>
<svg class="a" style="left:584px;top:222px" width="22" height="6" viewBox="0 0 22 6"><path d="M1 5 V1 H3 M8 1 V5 M7 3 H9 M17 1 H20 V5" fill="none" stroke="#7a7a7a" stroke-width="0.6"/></svg>
<svg class="a" style="left:574.5px;top:231px" width="6" height="5" viewBox="0 0 6 5"><path d="M0.5 4.5 H5.5 M0.5 4.5 L4 0.5" fill="none" stroke="#8a8a8a" stroke-width="0.6"/></svg>
<div class="a" style="left:582px;top:231px;width:24px;height:5px;border-bottom:0.5px solid #5e5e5e;border-right:0.5px solid #5e5e5e"></div>
<svg class="a" style="left:601.5px;top:232.6px" width="3" height="2" viewBox="0 0 3 2"><path d="M0.2 0.2 L1.5 1.6 L2.8 0.2" fill="none" stroke="#6a6a6a" stroke-width="0.7"/></svg>
<svg class="a" style="left:574px;top:240.5px" width="7" height="5" viewBox="0 0 7 5"><rect x="0.5" y="0.5" width="6" height="4" fill="none" stroke="#8a8a8a" stroke-width="0.6"/></svg>
<div class="a" style="left:584px;top:240.5px;width:22px;height:5px;border-bottom:0.5px solid #5e5e5e;border-right:0.5px solid #5e5e5e"></div>
<svg class="a" style="left:601.5px;top:242px" width="3" height="2" viewBox="0 0 3 2"><path d="M0.2 0.2 L1.5 1.6 L2.8 0.2" fill="none" stroke="#6a6a6a" stroke-width="0.7"/></svg>
<div class="a" style="left:557px;top:254px;width:106px;height:80px;background:linear-gradient(90deg,#fafafa 0%,#d0d0d0 20%,#8c8c8c 45%,#4a4a4a 70%,#000 100%);"></div>
<svg class="a" style="left:665px;top:256px" width="5" height="5" viewBox="0 0 5 5"><path d="M1 1.2 H4 M1.5 1.2 V4.5 H3.5 V1.2" fill="none" stroke="#6e6e6e" stroke-width="0.6"/></svg>
<svg class="a" style="left:555px;top:346.5px" width="7" height="7" viewBox="0 0 7 7"><path d="M0.8 6.2 L5.2 1.8" stroke="#7a7a7a" stroke-width="1.1"/><circle cx="5.6" cy="1.4" r="0.9" fill="#7a7a7a"/></svg>
<div class="x" style="left:567px;top:345.65px;font-size:3.1px;color:#7a7a7a;">Opacity:</div>
<div class="a" style="left:582.7px;top:342.3px;width:23.5px;height:6.5px;border:0.5px solid #5c5c5c"></div>
<svg class="a" style="left:601.5px;top:344.8px" width="3" height="2" viewBox="0 0 3 2"><path d="M0.2 0.2 L1.5 1.6 L2.8 0.2" fill="none" stroke="#6a6a6a" stroke-width="0.7"/></svg>
<div class="x" style="left:566px;top:354.65px;font-size:3.1px;color:#7a7a7a;">Location:</div>
<div class="a" style="left:582.7px;top:351.3px;width:23.5px;height:6.5px;border:0.5px solid #5c5c5c"></div>
<svg class="a" style="left:601.5px;top:353.8px" width="3" height="2" viewBox="0 0 3 2"><path d="M0.2 0.2 L1.5 1.6 L2.8 0.2" fill="none" stroke="#6a6a6a" stroke-width="0.7"/></svg>
<!-- APPEARANCE / ARTBOARDS -->
<div class="xb" style="left:554.5px;top:364.35px;font-size:3.4px;color:#e6e6e6;">Appearance</div>
<div class="x" style="left:580px;top:364.35px;font-size:3.4px;color:#a8a8a8;">Libraries</div>
<div class="x" style="left:601px;top:364.35px;font-size:3.4px;color:#a8a8a8;">Transparency</div>
<svg class="a" style="left:671.5px;top:362.7px" width="4" height="4" viewBox="0 0 4 4"><path d="M0.3 1 H3.7 M0.3 2 H3.7 M0.3 3 H3.7" stroke="#8a8a8a" stroke-width="0.45"/></svg>
<div class="xb" style="left:554.5px;top:376.35px;font-size:3.4px;color:#e6e6e6;">Artboards</div>
<svg class="a" style="left:671.5px;top:374.7px" width="4" height="4" viewBox="0 0 4 4"><path d="M0.3 1 H3.7 M0.3 2 H3.7 M0.3 3 H3.7" stroke="#8a8a8a" stroke-width="0.45"/></svg>
<!-- COLOR PANEL -->
<div class="xb" style="left:683px;top:85.65px;font-size:3.5px;color:#e0e0e0;">Color</div>
<div class="x" style="left:698px;top:85.65px;font-size:3.5px;color:#a8a8a8;">Properties</div>
<svg class="a" style="left:756.5px;top:84px" width="4" height="4" viewBox="0 0 4 4"><path d="M0.3 1 H3.7 M0.3 2 H3.7 M0.3 3 H3.7" stroke="#8a8a8a" stroke-width="0.45"/></svg>
<div class="a" style="left:680.5px;top:93.8px;width:4.6px;height:4.6px;border-radius:50%;background:#f4f4f4;border:0.8px solid #c33"></div>
<div class="a" style="left:682.2px;top:96px;width:2px;height:0.6px;background:#c33;transform:rotate(-45deg)"></div>
<div class="a" style="left:685px;top:93.8px;width:3.6px;height:4.6px;background:#000;"></div>
<div class="a" style="left:688.6px;top:93.5px;width:4px;height:5px;background:#fff;border:0.4px solid #888"></div>
<svg class="a" style="left:729.5px;top:94px" width="4" height="4" viewBox="0 0 4 4"><path d="M2 0.3 L3.7 3.5 H0.3Z" fill="#ccc"/></svg>
<div class="a" style="left:735px;top:93px;width:18.5px;height:5.8px;background:#474747;"></div>
<div class="x" style="left:736.5px;top:95.65px;font-size:3.2px;color:#a8a8a8;">FFFFFF</div>
<div class="x" style="left:681px;top:212.85px;font-size:3.4px;color:#a8a8a8;">Layers</div>
<div class="x" style="left:695px;top:212.85px;font-size:3.4px;color:#a8a8a8;">Transform</div>
<div class="x" style="left:713px;top:212.85px;font-size:3.4px;color:#a8a8a8;">Align</div>
<div class="xb" style="left:726.5px;top:212.85px;font-size:3.4px;color:#e6e6e6;">Pathfinder</div>
<svg class="a" style="left:756.5px;top:211.2px" width="4" height="4" viewBox="0 0 4 4"><path d="M0.3 1 H3.7 M0.3 2 H3.7 M0.3 3 H3.7" stroke="#8a8a8a" stroke-width="0.45"/></svg>
<div class="x" style="left:680px;top:221.85px;font-size:3.2px;color:#b8b8b8;">Shape Modes:</div>
<div class="x" style="left:680px;top:241.05px;font-size:3.2px;color:#b8b8b8;">Pathfinders:</div>
<div class="a" style="left:732px;top:229px;width:24px;height:6px;border:0.6px solid #5e5e5e;border-radius:1px"></div>
<div class="x" style="left:738.5px;top:231.65px;font-size:3.1px;color:#6e6e6e;">Expand</div>
<svg class="a" style="left:681.6px;top:229px" width="6" height="6" viewBox="0 0 6 6"><rect x="0.3" y="0.3" width="3.6" height="3.6" fill="#d0d0d0"/><rect x="2" y="2" width="3.6" height="3.6" fill="#d0d0d0"/></svg>
<svg class="a" style="left:694.7px;top:229px" width="6" height="6" viewBox="0 0 6 6"><rect x="0.3" y="0.3" width="3.6" height="3.6" fill="#d0d0d0"/><rect x="2" y="2" width="3.6" height="3.6" fill="#535353" stroke="#d0d0d0" stroke-width="0.5"/></svg>
<svg class="a" style="left:707px;top:229px" width="6" height="6" viewBox="0 0 6 6"><rect x="0.3" y="0.3" width="5.3" height="5.3" fill="none" stroke="#d0d0d0" stroke-width="0.6"/><rect x="2" y="2" width="2" height="2" fill="#d0d0d0"/></svg>
<svg class="a" style="left:720.5px;top:229px" width="6" height="6" viewBox="0 0 6 6"><rect x="0.3" y="0.3" width="3.6" height="3.6" fill="none" stroke="#d0d0d0" stroke-width="0.9"/><rect x="2" y="2" width="3.6" height="3.6" fill="none" stroke="#d0d0d0" stroke-width="0.9"/></svg>
<svg class="a" style="left:682.5px;top:247.5px" width="6" height="6" viewBox="0 0 6 6"><rect x="0.3" y="0.3" width="3.6" height="3.6" fill="#d0d0d0"/><rect x="2" y="2" width="3.6" height="3.6" fill="#d0d0d0"/></svg>
<svg class="a" style="left:695px;top:247.5px" width="6" height="6" viewBox="0 0 6 6"><rect x="0.3" y="0.3" width="3.6" height="3.6" fill="#d0d0d0"/><rect x="2" y="2" width="3.6" height="3.6" fill="#535353" stroke="#d0d0d0" stroke-width="0.5"/></svg>
<svg class="a" style="left:709px;top:247.5px" width="6" height="6" viewBox="0 0 6 6"><rect x="0.3" y="0.3" width="5.3" height="5.3" fill="none" stroke="#d0d0d0" stroke-width="0.6"/><rect x="2" y="2" width="2" height="2" fill="#d0d0d0"/></svg>
<svg class="a" style="left:721.5px;top:247.5px" width="6" height="6" viewBox="0 0 6 6"><rect x="0.3" y="0.3" width="3.6" height="3.6" fill="none" stroke="#d0d0d0" stroke-width="0.9"/><rect x="2" y="2" width="3.6" height="3.6" fill="none" stroke="#d0d0d0" stroke-width="0.9"/></svg>
<svg class="a" style="left:734px;top:247.5px" width="6" height="6" viewBox="0 0 6 6"><rect x="0.3" y="0.3" width="3.6" height="3.6" fill="#d0d0d0"/><rect x="2" y="2" width="3.6" height="3.6" fill="#d0d0d0"/></svg>
<svg class="a" style="left:748px;top:247.5px" width="6" height="6" viewBox="0 0 6 6"><rect x="0.3" y="0.3" width="3.6" height="3.6" fill="#d0d0d0"/><rect x="2" y="2" width="3.6" height="3.6" fill="#535353" stroke="#d0d0d0" stroke-width="0.5"/></svg>
<!-- ARTBOARD -->
<div class="a" style="left:181px;top:187.3px;width:289px;height:162.7px;background:#fff"></div>
<div class="a" style="left:181px;top:285px;width:144px;height:65px;background:linear-gradient(90deg,#5c4b9d,#45358c)"></div>
<svg class="a" style="left:194px;top:198px" width="40" height="18" viewBox="194 198 40 18"><g fill="none" stroke="#3b2e8b" stroke-width="2.3">
<path d="M197.1 200.2 H199.8 V208.1 H203 V210.7 H197.1 Z" fill="#3b2e8b" stroke="none"/>
<circle cx="207.75" cy="206.7" r="3.05"/>
<circle cx="216.6" cy="206.4" r="2.9"/>
<path d="M220.3 202.6 V211.2 Q220.3 213.5 217 213.5 Q215 213.5 214 212.3" stroke-width="2.3"/>
<circle cx="226.6" cy="206.7" r="3.4"/>
</g></svg>
<div class="t" style="left:195px;top:248px;font-family:'Liberation Serif',serif;font-size:13px;color:#4a3a90"><i style="font-size:8px;color:#8d7fc0">the</i>knowl</div>

<!-- DIALOG -->
<div class="a" style="left:238px;top:114px;width:293px;height:212px;background:#1f1f1f;box-shadow:0 0 1px 1px rgba(30,60,100,.6),0 5px 14px 3px rgba(0,0,0,.35)"></div>
<div class="a" style="left:238px;top:114px;width:293.5px;height:11px;background:#0e73d9"></div>
<div class="t" style="left:294.8px;top:148.3px;font-size:7.3px;letter-spacing:-0.19px;color:#e6e6e6;-webkit-text-stroke:0.22px #e6e6e6">You can do much more if you save as a cloud document</div>
<div class="a" style="left:254px;top:164.7px;width:261px;height:112.6px;background:#0a0a0a"></div>
<div class="a" style="left:341px;top:164.7px;width:0.8px;height:112.6px;background:#1f1f1f"></div>
<div class="a" style="left:428.8px;top:164.7px;width:0.8px;height:112.6px;background:#1f1f1f"></div>
<div class="a" style="left:254px;top:190.2px;width:261px;height:1px;background:#171717"></div>
<div class="a" style="left:254px;top:206.7px;width:261px;height:1px;background:#171717"></div>
<div class="a" style="left:254px;top:225.3px;width:261px;height:1px;background:#171717"></div>
<div class="a" style="left:254px;top:243.3px;width:261px;height:1px;background:#171717"></div>
<div class="a" style="left:254px;top:260px;width:261px;height:1px;background:#171717"></div>
<!-- buttons -->
<div class="a" style="left:396.3px;top:286.5px;width:59.3px;height:11.2px;border:1.2px solid #a0a0a0;border-radius:6px"></div>
<div class="a" style="left:461.7px;top:286.3px;width:58.4px;height:12px;background:#1473e6;border-radius:6px"></div>

<svg class="a" style="left:469.3px;top:147.3px" width="6" height="6" viewBox="0 0 6 6"><circle cx="3" cy="3" r="2.4" fill="none" stroke="#9a9a9a" stroke-width="0.5"/><path d="M3 2.6 V4.4" stroke="#9a9a9a" stroke-width="0.6"/><circle cx="3" cy="1.8" r="0.35" fill="#9a9a9a"/></svg>
<div class="a" style="left:524px;top:117px;width:4px;height:4px">
  <div class="a" style="left:-0.5px;top:1.6px;width:5px;height:0.8px;background:#cfe0f8;transform:rotate(45deg);height:0.6px"></div>
  <div class="a" style="left:-0.5px;top:1.6px;width:5px;height:0.8px;background:#cfe0f8;transform:rotate(-45deg);height:0.6px"></div>
</div>
<!-- laptop -->
<div class="a" style="left:382px;top:170.5px;width:6.5px;height:4.8px;border:1px solid #ddd;border-bottom:none"></div>
<div class="a" style="left:381px;top:175.3px;width:8.3px;height:1.8px;background:#ddd"></div>
<div class="x" style="left:366.9px;top:180.8px;font-size:4.5px;color:#ececec;-webkit-text-stroke:0.18px #ececec">On your computer</div>
<!-- cloud -->
<div class="a" style="left:468.7px;top:173.5px;width:8.3px;height:3px;background:#ddd;border-radius:1.5px"></div>
<div class="a" style="left:471px;top:170.7px;width:4.6px;height:4.6px;background:#ddd;border-radius:50%"></div>
<div class="x" style="left:457.8px;top:180.8px;font-size:4.5px;color:#ececec;-webkit-text-stroke:0.18px #ececec">Creative Cloud</div>
<div class="x" style="left:259px;top:198.8px;font-size:4.5px;color:#e8e8e8;-webkit-text-stroke:0.18px #e8e8e8">Offline access</div>
<div class="a" style="left:381.7px;top:196px;width:6px;height:6px;border-radius:50%;background:#2d9d78"></div>
<div class="a" style="left:383.09999999999997px;top:197.4px;width:3.2px;height:1.8px;border-left:0.9px solid #0a0a0a;border-bottom:0.9px solid #0a0a0a;transform:rotate(-45deg)"></div>
<div class="a" style="left:469.4px;top:196px;width:6px;height:6px;border-radius:50%;background:#2d9d78"></div>
<div class="a" style="left:470.79999999999995px;top:197.4px;width:3.2px;height:1.8px;border-left:0.9px solid #0a0a0a;border-bottom:0.9px solid #0a0a0a;transform:rotate(-45deg)"></div>
<div class="x" style="left:259px;top:215.9px;font-size:4.5px;color:#e8e8e8;-webkit-text-stroke:0.18px #e8e8e8">Cloud syncing to all your devices</div>
<div class="a" style="left:381.5px;top:212.9px;width:6.4px;height:6.4px;border-radius:50%;background:#e8e8e8"></div>
<div class="a" style="left:383.09999999999997px;top:215.7px;width:3.2px;height:0.8px;background:#0a0a0a;transform:rotate(45deg)"></div>
<div class="a" style="left:383.09999999999997px;top:215.7px;width:3.2px;height:0.8px;background:#0a0a0a;transform:rotate(-45deg)"></div>
<div class="a" style="left:469.4px;top:213.1px;width:6px;height:6px;border-radius:50%;background:#2d9d78"></div>
<div class="a" style="left:470.79999999999995px;top:214.5px;width:3.2px;height:1.8px;border-left:0.9px solid #0a0a0a;border-bottom:0.9px solid #0a0a0a;transform:rotate(-45deg)"></div>
<div class="x" style="left:259px;top:234.2px;font-size:4.5px;color:#e8e8e8;-webkit-text-stroke:0.18px #e8e8e8">Autosaving every change</div>
<div class="a" style="left:381.5px;top:231.20000000000002px;width:6.4px;height:6.4px;border-radius:50%;background:#e8e8e8"></div>
<div class="a" style="left:383.09999999999997px;top:234.0px;width:3.2px;height:0.8px;background:#0a0a0a;transform:rotate(45deg)"></div>
<div class="a" style="left:383.09999999999997px;top:234.0px;width:3.2px;height:0.8px;background:#0a0a0a;transform:rotate(-45deg)"></div>
<div class="a" style="left:469.4px;top:231.4px;width:6px;height:6px;border-radius:50%;background:#2d9d78"></div>
<div class="a" style="left:470.79999999999995px;top:232.8px;width:3.2px;height:1.8px;border-left:0.9px solid #0a0a0a;border-bottom:0.9px solid #0a0a0a;transform:rotate(-45deg)"></div>
<div class="x" style="left:259px;top:251.8px;font-size:4.5px;color:#e8e8e8;-webkit-text-stroke:0.18px #e8e8e8">Version history</div>
<div class="a" style="left:381.5px;top:248.8px;width:6.4px;height:6.4px;border-radius:50%;background:#e8e8e8"></div>
<div class="a" style="left:383.09999999999997px;top:251.6px;width:3.2px;height:0.8px;background:#0a0a0a;transform:rotate(45deg)"></div>
<div class="a" style="left:383.09999999999997px;top:251.6px;width:3.2px;height:0.8px;background:#0a0a0a;transform:rotate(-45deg)"></div>
<div class="a" style="left:469.4px;top:249px;width:6px;height:6px;border-radius:50%;background:#2d9d78"></div>
<div class="a" style="left:470.79999999999995px;top:250.4px;width:3.2px;height:1.8px;border-left:0.9px solid #0a0a0a;border-bottom:0.9px solid #0a0a0a;transform:rotate(-45deg)"></div>
<div class="x" style="left:259px;top:268.8px;font-size:4.5px;color:#e8e8e8;-webkit-text-stroke:0.18px #e8e8e8">Invite to edit</div>
<div class="a" style="left:381.5px;top:265.8px;width:6.4px;height:6.4px;border-radius:50%;background:#e8e8e8"></div>
<div class="a" style="left:383.09999999999997px;top:268.6px;width:3.2px;height:0.8px;background:#0a0a0a;transform:rotate(45deg)"></div>
<div class="a" style="left:383.09999999999997px;top:268.6px;width:3.2px;height:0.8px;background:#0a0a0a;transform:rotate(-45deg)"></div>
<div class="a" style="left:469.4px;top:266px;width:6px;height:6px;border-radius:50%;background:#2d9d78"></div>
<div class="a" style="left:470.79999999999995px;top:267.4px;width:3.2px;height:1.8px;border-left:0.9px solid #0a0a0a;border-bottom:0.9px solid #0a0a0a;transform:rotate(-45deg)"></div>

<div class="a" style="left:249.5px;top:288.5px;width:4px;height:4px;border-left:0.8px solid #888;border-top:0.8px solid #888"></div>
<div class="x" style="left:258.9px;top:289.6px;font-size:4.5px;color:#e6e6e6;-webkit-text-stroke:0.15px #e6e6e6">Don't show again</div>
<div class="x" style="left:402.3px;top:290.9px;font-size:4.5px;color:#e6e6e6;-webkit-text-stroke:0.18px #e6e6e6">Save on your computer</div>
<div class="x" style="left:467px;top:290.8px;font-size:4.45px;color:#fff;-webkit-text-stroke:0.28px #fff">Save to Creative Cloud</div>
</div></div>
</body></html>
